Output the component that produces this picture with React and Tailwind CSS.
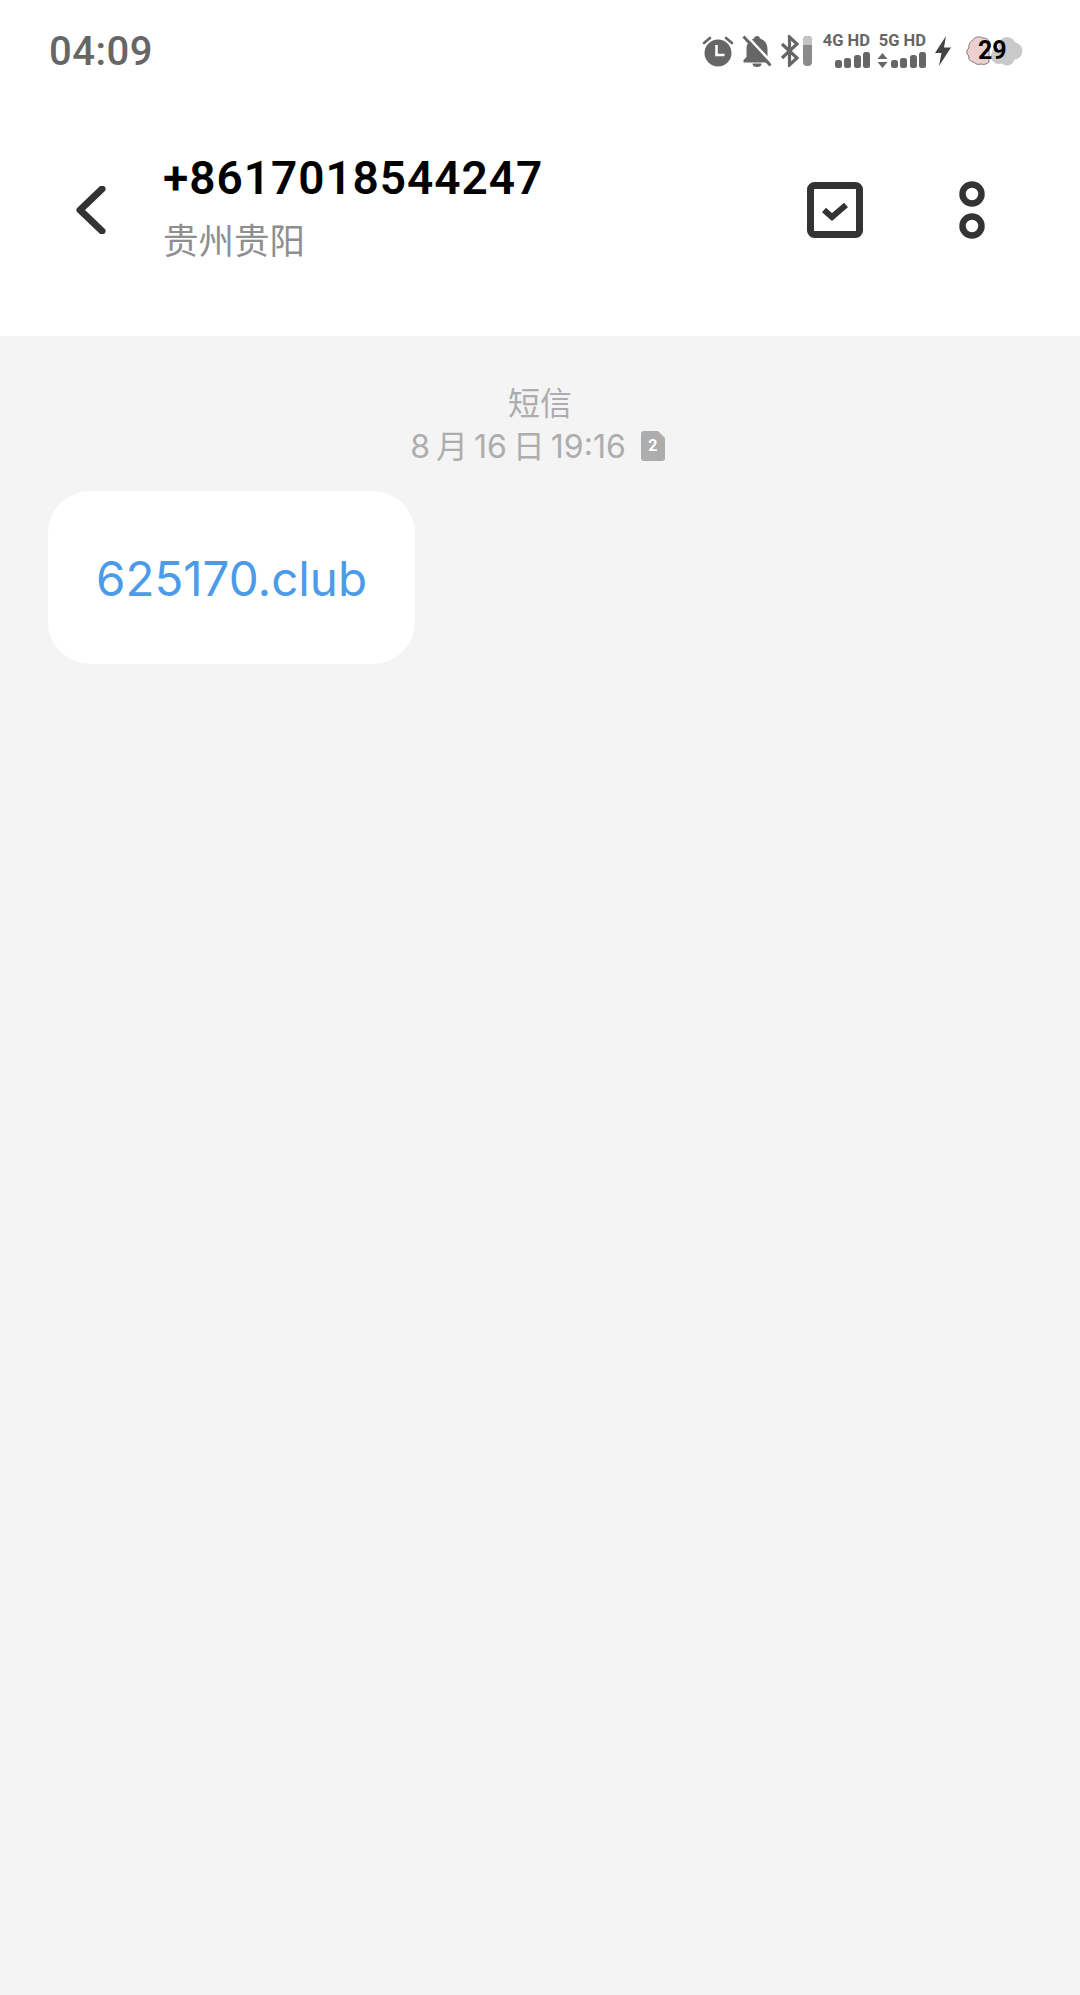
import React from "react";

const cjk = "font-['Inter','Noto_Sans_CJK_SC',sans-serif]";

const AlarmIcon = () => (
  <svg width="32" height="32" viewBox="0 0 32 32" fill="none">
    <circle cx="16" cy="18" r="13.5" fill="#666" />
    <path d="M14.5 10v10h8" stroke="#fff" strokeWidth="2.6" fill="none" />
    <path d="M2 8 8 3M30 8l-6-5" stroke="#666" strokeWidth="2.6" strokeLinecap="round" />
  </svg>
);

const BellOffIcon = () => (
  <svg width="30" height="32" viewBox="0 0 30 32" fill="none">
    <path d="M15 1c-1.500 0-3 1-3 2.500C7 5 4.500 9 4.500 14v8L1.500 25v2.500h27V25l-3-3v-8c0-5-2.500-9-7.500-10.500C18 2 16.500 1 15 1Z" fill="#666" />
    <path d="M10.500 28.500h9a4.500 3.500 0 0 1-9 0Z" fill="#666" />
    <path d="M4 0l27 29" stroke="#fff" strokeWidth="2.500" />
    <path d="M1.500 1.500l27 29" stroke="#666" strokeWidth="3" />
  </svg>
);

const BluetoothIcon = () => (
  <svg width="20" height="32" viewBox="0 0 20 32" fill="none">
    <path d="M2 9l15 14-7.500 7V2L17 9 2 23" stroke="#666" strokeWidth="3.200" strokeLinejoin="miter" />
  </svg>
);

const SignalBars = ({ arrows }) => (
  <div className="flex items-end justify-end gap-[2.500px] h-[17px]">
    {arrows && (
      <svg width="11" height="15" viewBox="0 0 11 15" className="mr-[0.500px]">
        <path d="M5.500 0l5 6h-10ZM5.500 15l5-6h-10Z" fill="#666" />
      </svg>
    )}
    <div className="w-[7px] h-[8px] rounded-[2.500px] bg-[#666]" />
    <div className="w-[7px] h-[10px] rounded-[2.500px] bg-[#666]" />
    <div className="w-[7px] h-[13px] rounded-[2.500px] bg-[#666]" />
    <div className="w-[7px] h-[16px] rounded-[2.500px] bg-[#666]" />
  </div>
);

const NetworkBadge = ({ label, arrows }) => (
  <div className="flex flex-col items-end w-[48px] gap-[3px]">
    <span className="font-['Roboto',sans-serif] text-[16.500px] leading-[14px] font-bold text-[#666] whitespace-nowrap">{label}</span>
    <SignalBars arrows={arrows} />
  </div>
);

const BoltIcon = () => (
  <svg width="18" height="30" viewBox="0 0 18 30">
    <path d="M12 0 1 17h6.500L5 30l12-18.500h-7L12 0Z" fill="#444" />
  </svg>
);

const WeatherBadge = () => (
  <div className="relative w-[58px] h-[30px]">
    <svg width="58" height="30" viewBox="0 0 58 30" className="absolute inset-0">
      <circle cx="34" cy="20" r="8" fill="#c9c9c9" />
      <circle cx="42" cy="10" r="9" fill="#c9c9c9" />
      <circle cx="49" cy="15" r="8.500" fill="#c9c9c9" />
      <circle cx="42" cy="22" r="7.500" fill="#c9c9c9" />
      <path d="M10 2c3-2 6-1 8 0 3 0 5 1 6 3v21c-2 2-5 3-8 2-3 1-6 0-7-2-4 0-6-3-5-6-3-2-3-6 0-8-1-4 2-7 6-10Z" fill="#eccfcf" stroke="#8a7676" strokeWidth="1" />
    </svg>
    <span className="absolute left-[13px] top-[1px] font-['Roboto',sans-serif] text-[25px] leading-[28px] font-bold text-black">29</span>
  </div>
);

const StatusBar = () => (
  <div className="flex items-center justify-between h-[100px] pt-[2px] pl-[49px] pr-[57px]">
    <span className="font-['Roboto',sans-serif] text-[40px] font-medium text-[#666] tracking-[0.5px] pt-[1px]">04:09</span>
    <div className="flex items-center gap-[8px]">
      <AlarmIcon />
      <BellOffIcon />
      <div className="flex items-center gap-[3px]">
        <BluetoothIcon />
        <div className="w-[9px] h-[30px] rounded-[4px] bg-[#8a8a8a] overflow-hidden">
          <div className="h-[9px] bg-[#c4c4c4]" />
        </div>
      </div>
      <div className="flex gap-[8px] ml-[2px]">
        <NetworkBadge label="4G HD" />
        <NetworkBadge label="5G HD" arrows />
      </div>
      <BoltIcon />
      <div className="ml-[5px]">
        <WeatherBadge />
      </div>
    </div>
  </div>
);

const Header = () => (
  <div className="flex items-center h-[236px] pl-[75px] pr-[95px] pb-[16px]">
    <svg width="32" height="48" viewBox="0 0 32 48" className="shrink-0" fill="none">
      <path d="M27 3 5 24l22 21" stroke="#333" strokeWidth="7" strokeLinecap="round" strokeLinejoin="round" />
    </svg>
    <div className="ml-[56px] flex-1 -mt-[5px]">
      <h1 className="font-['Roboto',sans-serif] text-[46px] leading-[54px] font-semibold text-black tracking-[0.95px]">+8617018544247</h1>
      <p className={`${cjk} mt-[14px] text-[35.500px] leading-[46px] text-[#8f8f8f]`}>贵州贵阳</p>
    </div>
    <div className="flex items-center gap-[96px]">
      <svg width="56" height="56" viewBox="0 0 56 56" fill="none">
        <rect x="3.500" y="3.500" width="49" height="49" rx="4" stroke="#333" strokeWidth="7" />
        <path d="M17 28l8 7 14-12" stroke="#333" strokeWidth="6" />
      </svg>
      <svg width="26" height="58" viewBox="0 0 26 58" fill="none">
        <circle cx="13" cy="13" r="9.500" stroke="#333" strokeWidth="6.500" />
        <circle cx="13" cy="45" r="9.500" stroke="#333" strokeWidth="6.500" />
      </svg>
    </div>
  </div>
);

const SimBadge = () => (
  <div className="relative w-[24px] h-[30px] -mt-[2px]">
    <svg width="24" height="30" viewBox="0 0 24 30" className="absolute inset-0">
      <path d="M3 0h14l7 7v20a3 3 0 0 1-3 3H3a3 3 0 0 1-3-3V3a3 3 0 0 1 3-3Z" fill="#adadad" />
    </svg>
    <span className="absolute inset-0 flex items-center justify-center font-['Roboto',sans-serif] text-[16px] font-bold text-white">2</span>
  </div>
);

export default function App() {
  return (
    <div className="min-h-[1995px] bg-[#f4f4f4] flex flex-col">
      <div className="bg-white">
        <StatusBar />
        <Header />
      </div>
      <div className="flex flex-col items-center pt-[46px] text-[#adadad]">
        <span className={`${cjk} text-[32px] leading-[44px]`}>短信</span>
        <div className="flex items-center gap-[15px] h-[42px] mr-[5px]">
          <span className={`${cjk} text-[32px] leading-[42px] whitespace-nowrap [word-spacing:-3px]`}>8 月 16 日 19:16</span>
          <SimBadge />
        </div>
      </div>
      <div className="pl-[48px] pt-[23px]">
        <div className="inline-flex items-center justify-center w-[367px] h-[173px] rounded-[42px] bg-white pt-[3px]">
          <span className="font-['Inter',sans-serif] text-[47.500px] text-[#4c9be8]">625170.club</span>
        </div>
      </div>
    </div>
  );
}
